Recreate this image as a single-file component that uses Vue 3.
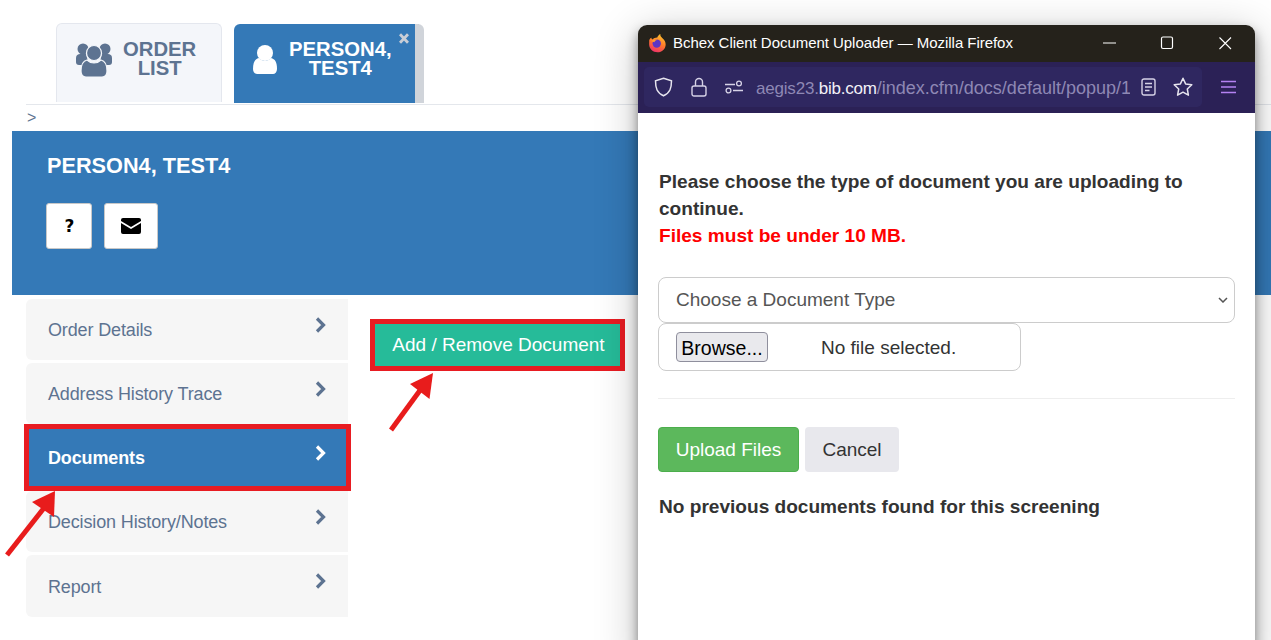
<script setup>
const navItems = [
  { label: 'Order Details' },
  { label: 'Address History Trace' },
  { label: 'Documents', active: true },
  { label: 'Decision History/Notes' },
  { label: 'Report' }
]
</script>

<template>
  <div class="page">
    <div class="tabs">
      <div class="tab tab-order">
        <svg class="ic-group" viewBox="0 0 36 34" width="36" height="34">
          <circle cx="7" cy="6" r="5.500" fill="#5d7391"/>
          <circle cx="29" cy="6" r="5.500" fill="#5d7391"/>
          <path d="M0 15c0-3 2-4 4-4h6l3 11H3c-2 0-3-1-3-3z" fill="#5d7391"/>
          <path d="M36 15c0-3-2-4-4-4h-6l-3 11h10c2 0 3-1 3-3z" fill="#5d7391"/>
          <circle cx="18" cy="10" r="7.500" fill="#5d7391" stroke="#f4f6fa" stroke-width="1.200"/>
          <path d="M5 28c0-6 2-10 6-11 2 2 4 3 7 3s5-1 7-3c4 1 6 5 6 11 0 4-2 6-5 6H10c-3 0-5-2-5-6z" fill="#5d7391" stroke="#f4f6fa" stroke-width="1.200"/>
        </svg>
        <div class="tab-text">ORDER<br>LIST</div>
      </div>
      <div class="tab tab-person">
        <svg class="ic-user" viewBox="0 0 24 30" width="24" height="30">
          <circle cx="12" cy="8" r="8" fill="#fff"/>
          <path d="M0 24c0-7 2-10 6-11 2 2 4 3 6 3s4-1 6-3c4 1 6 4 6 11 0 3-2 5-4 5H4c-2 0-4-2-4-5z" fill="#fff"/>
        </svg>
        <div class="tab-text">PERSON4,<br>TEST4</div>
        <svg class="tab-close" viewBox="0 0 10 11" width="10" height="11">
          <path d="M1 1.200l8 8.600M9 1.200l-8 8.600" stroke="#c9ced6" stroke-width="2.800"/>
        </svg>
      </div>
    </div>
    <div class="crumb">&gt;</div>
    <header class="banner">
      <h1>PERSON4, TEST4</h1>
      <div class="banner-btns">
        <button class="icon-btn q">?</button>
        <button class="icon-btn env">
          <svg viewBox="0 0 20 16" width="20" height="16">
            <path d="M2 0h16a2 2 0 0 1 2 2v1l-10 6L0 3V2a2 2 0 0 1 2-2z" fill="#000"/>
            <path d="M0 5l10 6 10-6v9a2 2 0 0 1-2 2H2a2 2 0 0 1-2-2z" fill="#000"/>
          </svg>
        </button>
      </div>
    </header>
    <div class="body">
      <nav class="side">
        <a v-for="n in navItems" :key="n.label" class="nav-item" :class="{ active: n.active }">
          <span>{{ n.label }}</span>
          <svg class="chev" viewBox="0 0 11 16" width="11" height="16">
            <path d="M2 1.500l6.500 6.500-6.500 6.500" fill="none" stroke="currentColor" stroke-width="3.200"/>
          </svg>
        </a>
      </nav>
      <div class="main">
        <button class="add-btn">Add / Remove Document</button>
      </div>
    </div>

    <div class="mark mark-nav"></div>
    <div class="mark mark-add"></div>
    <svg class="arrow arrow-a" viewBox="0 0 60 80" width="60" height="80">
      <path d="M4 66L41 19" stroke="#e81c1c" stroke-width="5" fill="none"/>
      <path d="M52 2L29 13l22 15z" fill="#e81c1c"/>
    </svg>
    <svg class="arrow arrow-b" viewBox="0 0 60 80" width="60" height="80">
      <path d="M8 72L38 31" stroke="#e81c1c" stroke-width="5" fill="none"/>
      <path d="M50 15L27 26l19.500 15z" fill="#e81c1c"/>
    </svg>

    <section class="window">
      <div class="titlebar">
        <svg class="ff" viewBox="0 0 20 20" width="19" height="20">
          <defs>
            <linearGradient id="ffg" x1="0.700" y1="0" x2="0.300" y2="1">
              <stop offset="0" stop-color="#ffc52e"/>
              <stop offset="0.500" stop-color="#ff7a2a"/>
              <stop offset="1" stop-color="#ee2f6b"/>
            </linearGradient>
          </defs>
          <path d="M1.300 7c.6-1.300 1.400-2 2.300-2.400 0 .9.300 1.500.8 1.800C5.800 4.800 8 4 9.800 4.100 10.300 2.700 11.700 1.200 13 .6c-.2 1.700.6 3 2 4.100 2.400 2 3.600 4.400 3.600 6.800 0 4.700-3.900 8.200-8.600 8.200-4.800 0-8.800-3.500-8.800-8.400 0-1.700.1-3 .1-4.300z" fill="url(#ffg)"/>
          <circle cx="9.200" cy="10.600" r="4.400" fill="#5b35c4"/>
          <path d="M3.500 8c1.500-1.500 4-2.200 6.300-1.500-1.700.4-2.800 1.500-3.100 2.800-.9-.2-2.100-.6-3.200-1.300z" fill="#ff9a2e"/>
        </svg>
        <span class="win-title">Bchex Client Document Uploader — Mozilla Firefox</span>
        <div class="win-ctrls">
          <svg viewBox="0 0 14 14" width="14" height="14"><path d="M1 7h13" stroke="#fff" stroke-width="1"/></svg>
          <svg viewBox="0 0 14 14" width="14" height="14"><rect x="1.500" y="1" width="11" height="11.500" rx="1.500" fill="none" stroke="#fff" stroke-width="1.200"/></svg>
          <svg viewBox="0 0 14 14" width="14" height="14"><path d="M1.500 1.500l11.500 11.500M13 1.500l-11.500 11.500" stroke="#fff" stroke-width="1.100"/></svg>
        </div>
      </div>
      <div class="toolbar">
        <div class="urlbar">
          <svg class="u-ic" viewBox="0 0 19 20" width="19" height="20"><path d="M9.500 1.200l8 2.600c0 7.500-1.500 12-8 15-6.500-3-8-7.500-8-15z" fill="none" stroke="#e6e4ee" stroke-width="1.500"/></svg>
          <svg class="u-ic lock" viewBox="0 0 16 20" width="16" height="20"><rect x="1" y="9" width="14" height="10" rx="2" fill="none" stroke="#d6d2e6" stroke-width="1.400"/><path d="M4.500 9V5a3.500 3.500 0 0 1 7 0v4" fill="none" stroke="#d6d2e6" stroke-width="1.400"/></svg>
          <svg class="u-ic tune" viewBox="0 0 18 14" width="18" height="14"><path d="M0 4.500h10M8 10.500h10" stroke="#d6d2e6" stroke-width="1.400"/><circle cx="14" cy="3.500" r="2.400" fill="none" stroke="#d6d2e6" stroke-width="1.300"/><circle cx="3.500" cy="10.500" r="2.400" fill="none" stroke="#d6d2e6" stroke-width="1.300"/></svg>
          <div class="url"><span>aegis23.</span><b>bib.com</b><span class="url-rest">/index.cfm/docs/default/popup/1</span></div>
          <svg class="u-ic doc" viewBox="0 0 15 18" width="15" height="18"><rect x="1" y="1" width="13" height="16" rx="2" fill="none" stroke="#d6d2e6" stroke-width="1.400"/><path d="M4 5.500h7M4 9h7M4 12.500h4.500" stroke="#d6d2e6" stroke-width="1.300"/></svg>
          <svg class="u-ic star" viewBox="0 0 20 20" width="20" height="20"><path d="M10 1.200l2.600 5.700 6.200.8-4.500 4.300 1.100 6.200-5.400-3-5.400 3 1.100-6.200L1.200 7.700l6.200-.8z" fill="none" stroke="#e6e4ee" stroke-width="1.500" stroke-linejoin="round"/></svg>
        </div>
        <svg class="menu" viewBox="0 0 15 14" width="15" height="14"><path d="M0 1.500h15M0 7h15M0 12.500h15" stroke="#b482f2" stroke-width="1.500"/></svg>
      </div>
      <div class="content">
        <p class="lead">Please choose the type of document you are uploading to continue.<br><span class="warn">Files must be under 10 MB.</span></p>
        <div class="select">
          <span>Choose a Document Type</span>
          <svg viewBox="0 0 10 6" width="10" height="6"><path d="M1 1l4 4 4-4" fill="none" stroke="#555" stroke-width="1.500"/></svg>
        </div>
        <div class="file">
          <span class="browse">Browse...</span>
          <span class="nofile">No file selected.</span>
        </div>
        <hr>
        <div class="actions">
          <button class="upload">Upload Files</button>
          <button class="cancel">Cancel</button>
        </div>
        <p class="none">No previous documents found for this screening</p>
      </div>
    </section>
  </div>
</template>

<style>
html, body { margin: 0; background: #fff; overflow: hidden; }
</style>

<style scoped>
* { box-sizing: border-box; }
.page {
  position: relative;
  width: 1271px;
  height: 640px;
  overflow: hidden;
  background: #fff;
  font-family: "Liberation Sans", Arial, sans-serif;
}
.tabs {
  height: 105px;
  margin-left: 26px;
  padding: 23px 0 0 30px;
  display: flex;
  gap: 12px;
  border-bottom: 1px solid #e4e7ec;
}
.tab {
  height: 79px;
  border-radius: 6px 6px 0 0;
  display: flex;
  align-items: flex-start;
  font-weight: 700;
  font-size: 20.300px;
  line-height: 19px;
  text-align: center;
}
.tab-order {
  width: 166px;
  background: #f4f6fa;
  border: 1px solid #e4e7ee;
  border-bottom: 0;
  color: #5d7391;
  padding: 16px 0 0 19px;
}
.ic-group { margin-top: 3px; }
.tab-order .tab-text { margin-left: 11px; }
.tab-person {
  position: relative;
  width: 190px;
  margin-top: 1px;
  background: #3479b7;
  border-right: 9px solid #d0d4da;
  color: #fff;
  padding: 16px 0 0 19px;
}
.ic-user { margin-top: 5px; }
.tab-person .tab-text { margin-left: 12px; }
.tab-close {
  position: absolute;
  top: 9px;
  right: 6px;
}
.crumb {
  margin-left: 26px;
  height: 26px;
  padding: 4px 0 0 1px;
  font-size: 16px;
  line-height: 18px;
  color: #5d7391;
}
.banner {
  margin-left: 12px;
  height: 164px;
  background: #3479b7;
  padding: 22px 0 0 35px;
  color: #fff;
}
.banner h1 {
  margin: 0;
  font-size: 21.700px;
  line-height: 26px;
  font-weight: 700;
}
.banner-btns {
  margin: 24px 0 0 -1px;
  display: flex;
  gap: 12px;
}
.icon-btn {
  height: 46px;
  background: #fff;
  border: 1px solid #c8c8c8;
  border-radius: 3px;
  display: flex;
  align-items: center;
  justify-content: center;
  padding: 0;
}
.q { width: 46px; padding-left: 1px; font: 700 17px "DejaVu Sans", sans-serif; color: #000; }
.env { width: 54px; }
.body {
  display: flex;
  padding: 4px 0 0 26px;
}
.side {
  width: 322px;
  display: flex;
  flex-direction: column;
  gap: 3px;
}
.nav-item {
  height: 61px;
  background: #f6f6f6;
  border-radius: 6px 0 0 6px;
  padding: 0 22px 0 22px;
  display: flex;
  justify-content: space-between;
  font-size: 18px;
  letter-spacing: -.14px;
  line-height: 62px;
  color: #5d7391;
}
.nav-item:last-child { height: 62px; line-height: 64px; }
.nav-item .chev { margin-top: 18px; }
.nav-item.active {
  background: #3479b7;
  color: #fff;
  font-weight: 700;
  border-radius: 0;
}
.main { padding: 25px 0 0 27px; }
.add-btn {
  display: block;
  width: 247px;
  height: 42px;
  background: #26bb99;
  border: 0;
  color: #fff;
  font: 19px "Liberation Sans", Arial, sans-serif;
  padding: 0 0 1px;
}
.mark {
  position: absolute;
  border: 5px solid #e81c22;
  pointer-events: none;
}
.mark-nav { left: 24px; top: 424px; width: 327px; height: 67px; }
.mark-add { left: 370px; top: 319px; width: 255px; height: 52px; }
.arrow { position: absolute; pointer-events: none; }
.arrow-a { left: 3px; top: 489px; }
.arrow-b { left: 383px; top: 358px; }
.window {
  position: absolute;
  left: 638px;
  top: 25px;
  width: 617px;
  height: 640px;
  border-radius: 9px 9px 0 0;
  overflow: hidden;
  background: #fff;
  display: flex;
  flex-direction: column;
}
.page::after {
  content: "";
  position: absolute;
  left: 638px;
  top: 25px;
  width: 617px;
  height: 640px;
  border-radius: 9px 9px 0 0;
  box-shadow: 0 6px 12px rgba(0, 0, 0, .42), 0 8px 44px rgba(0, 0, 0, .24);
  pointer-events: none;
}
.titlebar {
  height: 37px;
  background: #25221b;
  display: flex;
  align-items: center;
  padding: 0 0 2px 10px;
  color: #fff;
  flex: none;
}
.win-title {
  margin-left: 6px;
  font-size: 15px;
  letter-spacing: -.04px;
  white-space: nowrap;
}
.win-ctrls {
  margin-left: auto;
  padding-right: 23px;
  display: flex;
  gap: 44px;
}
.toolbar {
  height: 51px;
  flex: none;
  background: #2b2156;
  padding: 5px 0 0 6px;
  display: flex;
  align-items: flex-start;
}
.urlbar {
  width: 558px;
  height: 40px;
  background: #2f2760;
  border-radius: 5px;
  display: flex;
  align-items: center;
  padding-left: 10px;
}
.u-ic { flex: none; }
.lock { margin-left: 18px; }
.tune { margin-left: 18px; }
.url {
  margin-left: 13px;
  padding-top: 3px;
  width: 374px;
  white-space: nowrap;
  overflow: hidden;
  font-size: 17px;
  letter-spacing: -.2px;
  color: #8e88b4;
  flex: none;
}
.url-rest { font-size: 18px; letter-spacing: 0; }
.url b { color: #f2f1f7; font-weight: 400; }
.doc { margin-left: 11px; }
.star { margin-left: 17px; }
.menu { margin: 13px 0 0 19px; flex: none; }
.content {
  padding: 55px 20px 0;
  color: #333;
}
.lead {
  margin: 0 0 0 1px;
  font-size: 19.080px;
  font-weight: 700;
  line-height: 27px;
}
.warn { color: #f00; }
.select {
  margin-top: 28px;
  height: 46px;
  border: 1px solid #ccc;
  border-radius: 8px;
  padding: 0 6px 0 17px;
  display: flex;
  align-items: center;
  justify-content: space-between;
  font-size: 19px;
  color: #555;
}
.file {
  width: 363px;
  height: 48px;
  border: 1px solid #ccc;
  border-radius: 8px;
  padding-left: 17px;
  display: flex;
  align-items: center;
  font-size: 19px;
  color: #333;
}
.browse {
  width: 92px;
  height: 30px;
  background: #e9e9ed;
  border: 1px solid #8f8f9d;
  border-radius: 4px;
  color: #000;
  font-size: 19.500px;
  line-height: 30px;
  text-align: center;
}
.nofile { margin-left: 53px; padding-top: 2px; }
hr {
  margin: 27px 0 28px;
  border: 0;
  border-top: 1px solid #eee;
}
.actions { display: flex; gap: 6px; }
.actions button {
  height: 45px;
  border-radius: 4px;
  font: 19px "Liberation Sans", Arial, sans-serif;
  padding: 0;
}
.upload {
  width: 141px;
  background: #5cb85c;
  border: 1px solid #4cae4c;
  color: #fff;
}
.cancel {
  width: 94px;
  background: #e8e8ed;
  border: 0;
  color: #333;
}
.none {
  margin: 22px 0 0 1px;
  font-size: 19.080px;
  font-weight: 700;
  line-height: 26px;
}
</style>
